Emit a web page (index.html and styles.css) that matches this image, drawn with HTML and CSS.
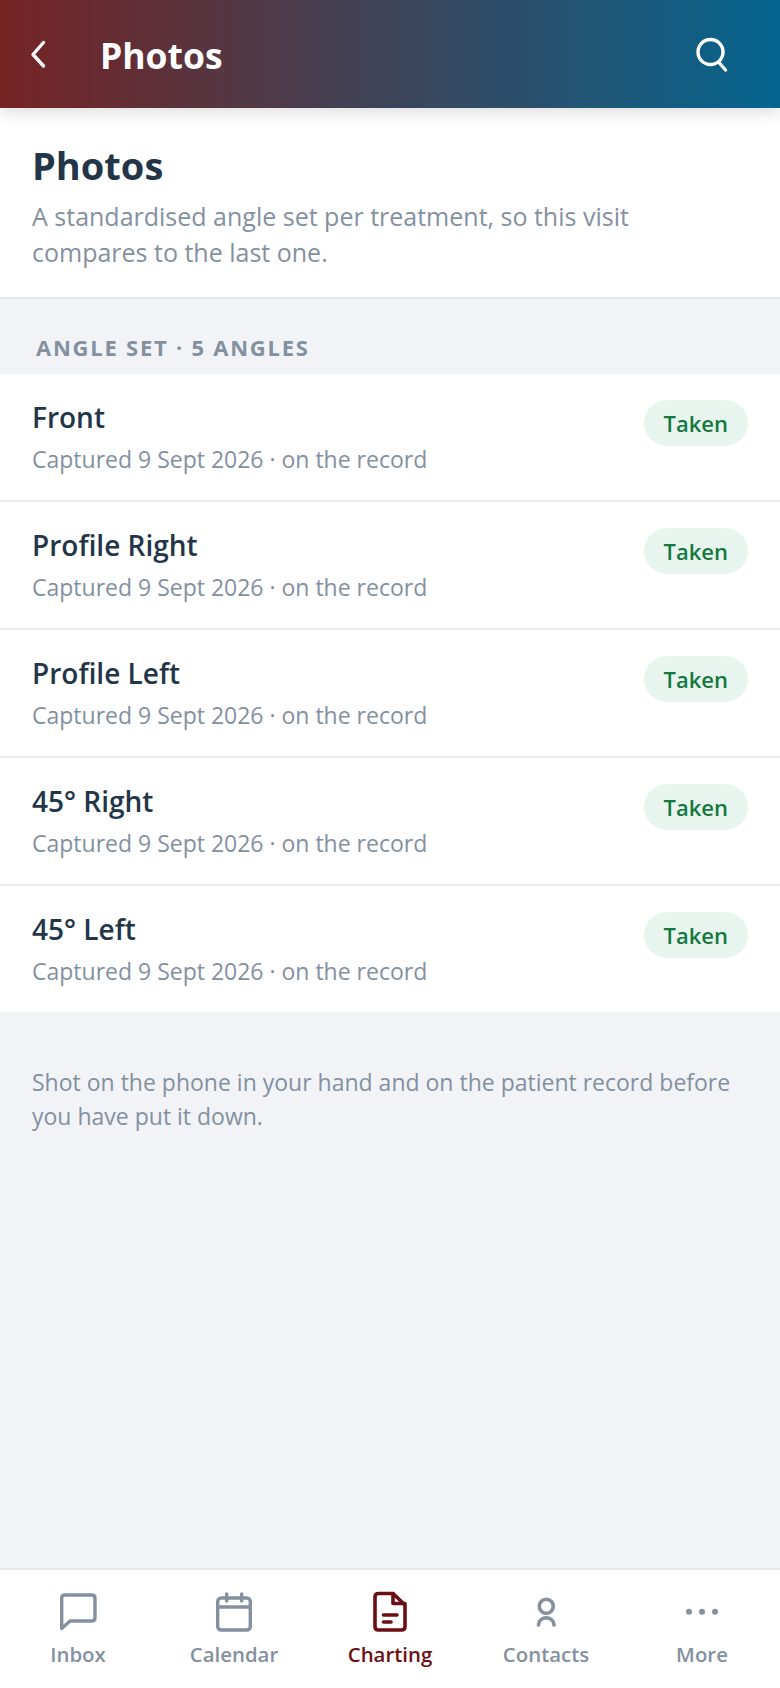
FILE: index.html
```html
<!DOCTYPE html>
<html lang="en">
<head>
<meta charset="utf-8">
<title>Photos</title>
<link rel="stylesheet" href="styles.css">
</head>
<body>
<div class="app">
  <header class="appbar">
    <svg class="back" width="44" height="44" viewBox="0 0 44 44" fill="none" stroke="#fff" stroke-width="3.4" stroke-linecap="round" stroke-linejoin="round"><path d="M27.5 10.5 L17 22.5 L27.5 34"/></svg>
    <h1 class="appbar-title">Photos</h1>
    <svg class="search" width="44" height="44" viewBox="0 0 44 44" fill="none" stroke="#fff" stroke-width="3.4" stroke-linecap="round"><circle cx="20.5" cy="20" r="12.5"/><path d="M28.5 30 L35.5 38"/></svg>
  </header>
  <section class="intro">
    <h2 class="intro-title">Photos</h2>
    <p class="intro-sub">A standardised angle set per treatment, so this visit compares to the last one.</p>
  </section>
  <main class="content">
    <div class="section-label">ANGLE SET · 5 ANGLES</div>
    <ul class="list">
      <li class="row"><div><div class="row-title">Front</div><div class="row-sub">Captured 9 Sept 2026 · on the record</div></div><span class="pill">Taken</span></li>
      <li class="row"><div><div class="row-title">Profile Right</div><div class="row-sub">Captured 9 Sept 2026 · on the record</div></div><span class="pill">Taken</span></li>
      <li class="row"><div><div class="row-title">Profile Left</div><div class="row-sub">Captured 9 Sept 2026 · on the record</div></div><span class="pill">Taken</span></li>
      <li class="row"><div><div class="row-title">45° Right</div><div class="row-sub">Captured 9 Sept 2026 · on the record</div></div><span class="pill">Taken</span></li>
      <li class="row"><div><div class="row-title">45° Left</div><div class="row-sub">Captured 9 Sept 2026 · on the record</div></div><span class="pill">Taken</span></li>
    </ul>
    <p class="note">Shot on the phone in your hand and on the patient record before you have put it down.</p>
  </main>
  <nav class="tabs">
    <div class="tab">
      <svg width="44" height="44" viewBox="0 0 44 44" fill="none" stroke="currentColor" stroke-width="3.4" stroke-linejoin="round" stroke-linecap="round"><path d="M9 5 Q5.7 5 5.7 8.3 V38.5 L14 31 H35.7 Q39 31 39 27.7 V8.3 Q39 5 35.7 5 Z"/></svg>
      <span>Inbox</span>
    </div>
    <div class="tab">
      <svg width="44" height="44" viewBox="0 0 44 44" fill="none" stroke="currentColor" stroke-width="3.4" stroke-linejoin="round" stroke-linecap="round"><rect x="5.7" y="8" width="32.6" height="32" rx="3.5"/><path d="M5.7 17 H38.3 M14.7 4 V11 M29.7 4 V11"/></svg>
      <span>Calendar</span>
    </div>
    <div class="tab active">
      <svg width="44" height="44" viewBox="0 0 44 44" fill="none" stroke="currentColor" stroke-width="3.6" stroke-linejoin="round" stroke-linecap="round"><path d="M10.5 3.5 H25 L37 15 V36.5 Q37 40 33.5 40 H10.5 Q7 40 7 36.5 V7 Q7 3.5 10.5 3.5 Z"/><path d="M25 3.5 V13.5 H37 M15.5 25 H29 M15.5 32 H23"/></svg>
      <span>Charting</span>
    </div>
    <div class="tab">
      <svg width="44" height="44" viewBox="0 0 44 44" fill="none" stroke="currentColor" stroke-width="3.6" stroke-linecap="round"><circle cx="22.3" cy="16.3" r="7"/><path d="M14.5 35 C15 25.5 29.5 25.5 30 35"/></svg>
      <span>Contacts</span>
    </div>
    <div class="tab">
      <svg width="44" height="44" viewBox="0 0 44 44" fill="currentColor"><circle cx="9" cy="21.7" r="3"/><circle cx="22" cy="21.7" r="3"/><circle cx="35" cy="21.7" r="3"/></svg>
      <span>More</span>
    </div>
  </nav>
</div>
</body>
</html>
```
FILE: styles.css
```css
* { box-sizing: border-box; }
html, body { margin: 0; padding: 0; }
body { font-family: "Open Sans", "Noto Sans", sans-serif; color: #1f2f40; background: #f1f3f7; }
.app { width: 780px; height: 1688px; display: flex; flex-direction: column; overflow: hidden; }
.appbar { height: 108px; flex: none; display: flex; align-items: center; padding: 0 46px 0 16px; background: linear-gradient(90deg, #752323, #05658f); box-shadow: 0 4px 16px rgba(0,0,0,.14); position: relative; z-index: 1; }
.back { flex: none; }
.appbar-title { margin: 2px 0 0 40px; flex: 1; font-size: 35.5px; line-height: 46px; font-weight: 700; color: #fff; }
.search { flex: none; }
.intro { flex: none; height: 191px; padding: 32px 32px 0; background: #fff; border-bottom: 2px solid #e4e7ec; }
.intro-title { margin: 0; font-size: 38px; line-height: 50px; font-weight: 700; color: #233649; }
.intro-sub { margin: 8px 0 0; font-size: 25px; line-height: 36px; color: #84909f; }
.content { flex: 1; min-height: 0; }
.section-label { height: 75px; padding: 33px 36px 0; font-size: 22px; line-height: 30px; font-weight: 700; letter-spacing: 1.76px; color: #84909f; }
.list { list-style: none; margin: 0; padding: 0; background: #fff; }
.row { height: 128px; display: flex; justify-content: space-between; align-items: flex-start; padding: 25px 32px 0; border-bottom: 2px solid #e8ebef; }
.row:last-child { border-bottom: 0; height: 126px; }
.row-title { font-size: 28px; line-height: 36px; font-weight: 600; color: #233649; }
.row-sub { margin-top: 7px; font-size: 23px; line-height: 34px; color: #84909f; }
.pill { height: 46px; padding: 0 20px; margin-top: 1px; border-radius: 23px; background: #e8f5ee; color: #15783f; font-size: 22px; line-height: 46px; font-weight: 600; }
.note { margin: 0; padding: 53px 32px 0; font-size: 23px; line-height: 34px; color: #84909f; }
.tabs { flex: none; height: 120px; display: flex; background: #fff; border-top: 2px solid #e4e7ec; padding-top: 20px; }
.tab { flex: 1; display: flex; flex-direction: column; align-items: center; color: #84909f; font-size: 20.4px; line-height: 28px; font-weight: 600; }
.tab svg { flex: none; }
.tab span { margin-top: 6px; }
.tab.active { color: #6b0f14; }
```
